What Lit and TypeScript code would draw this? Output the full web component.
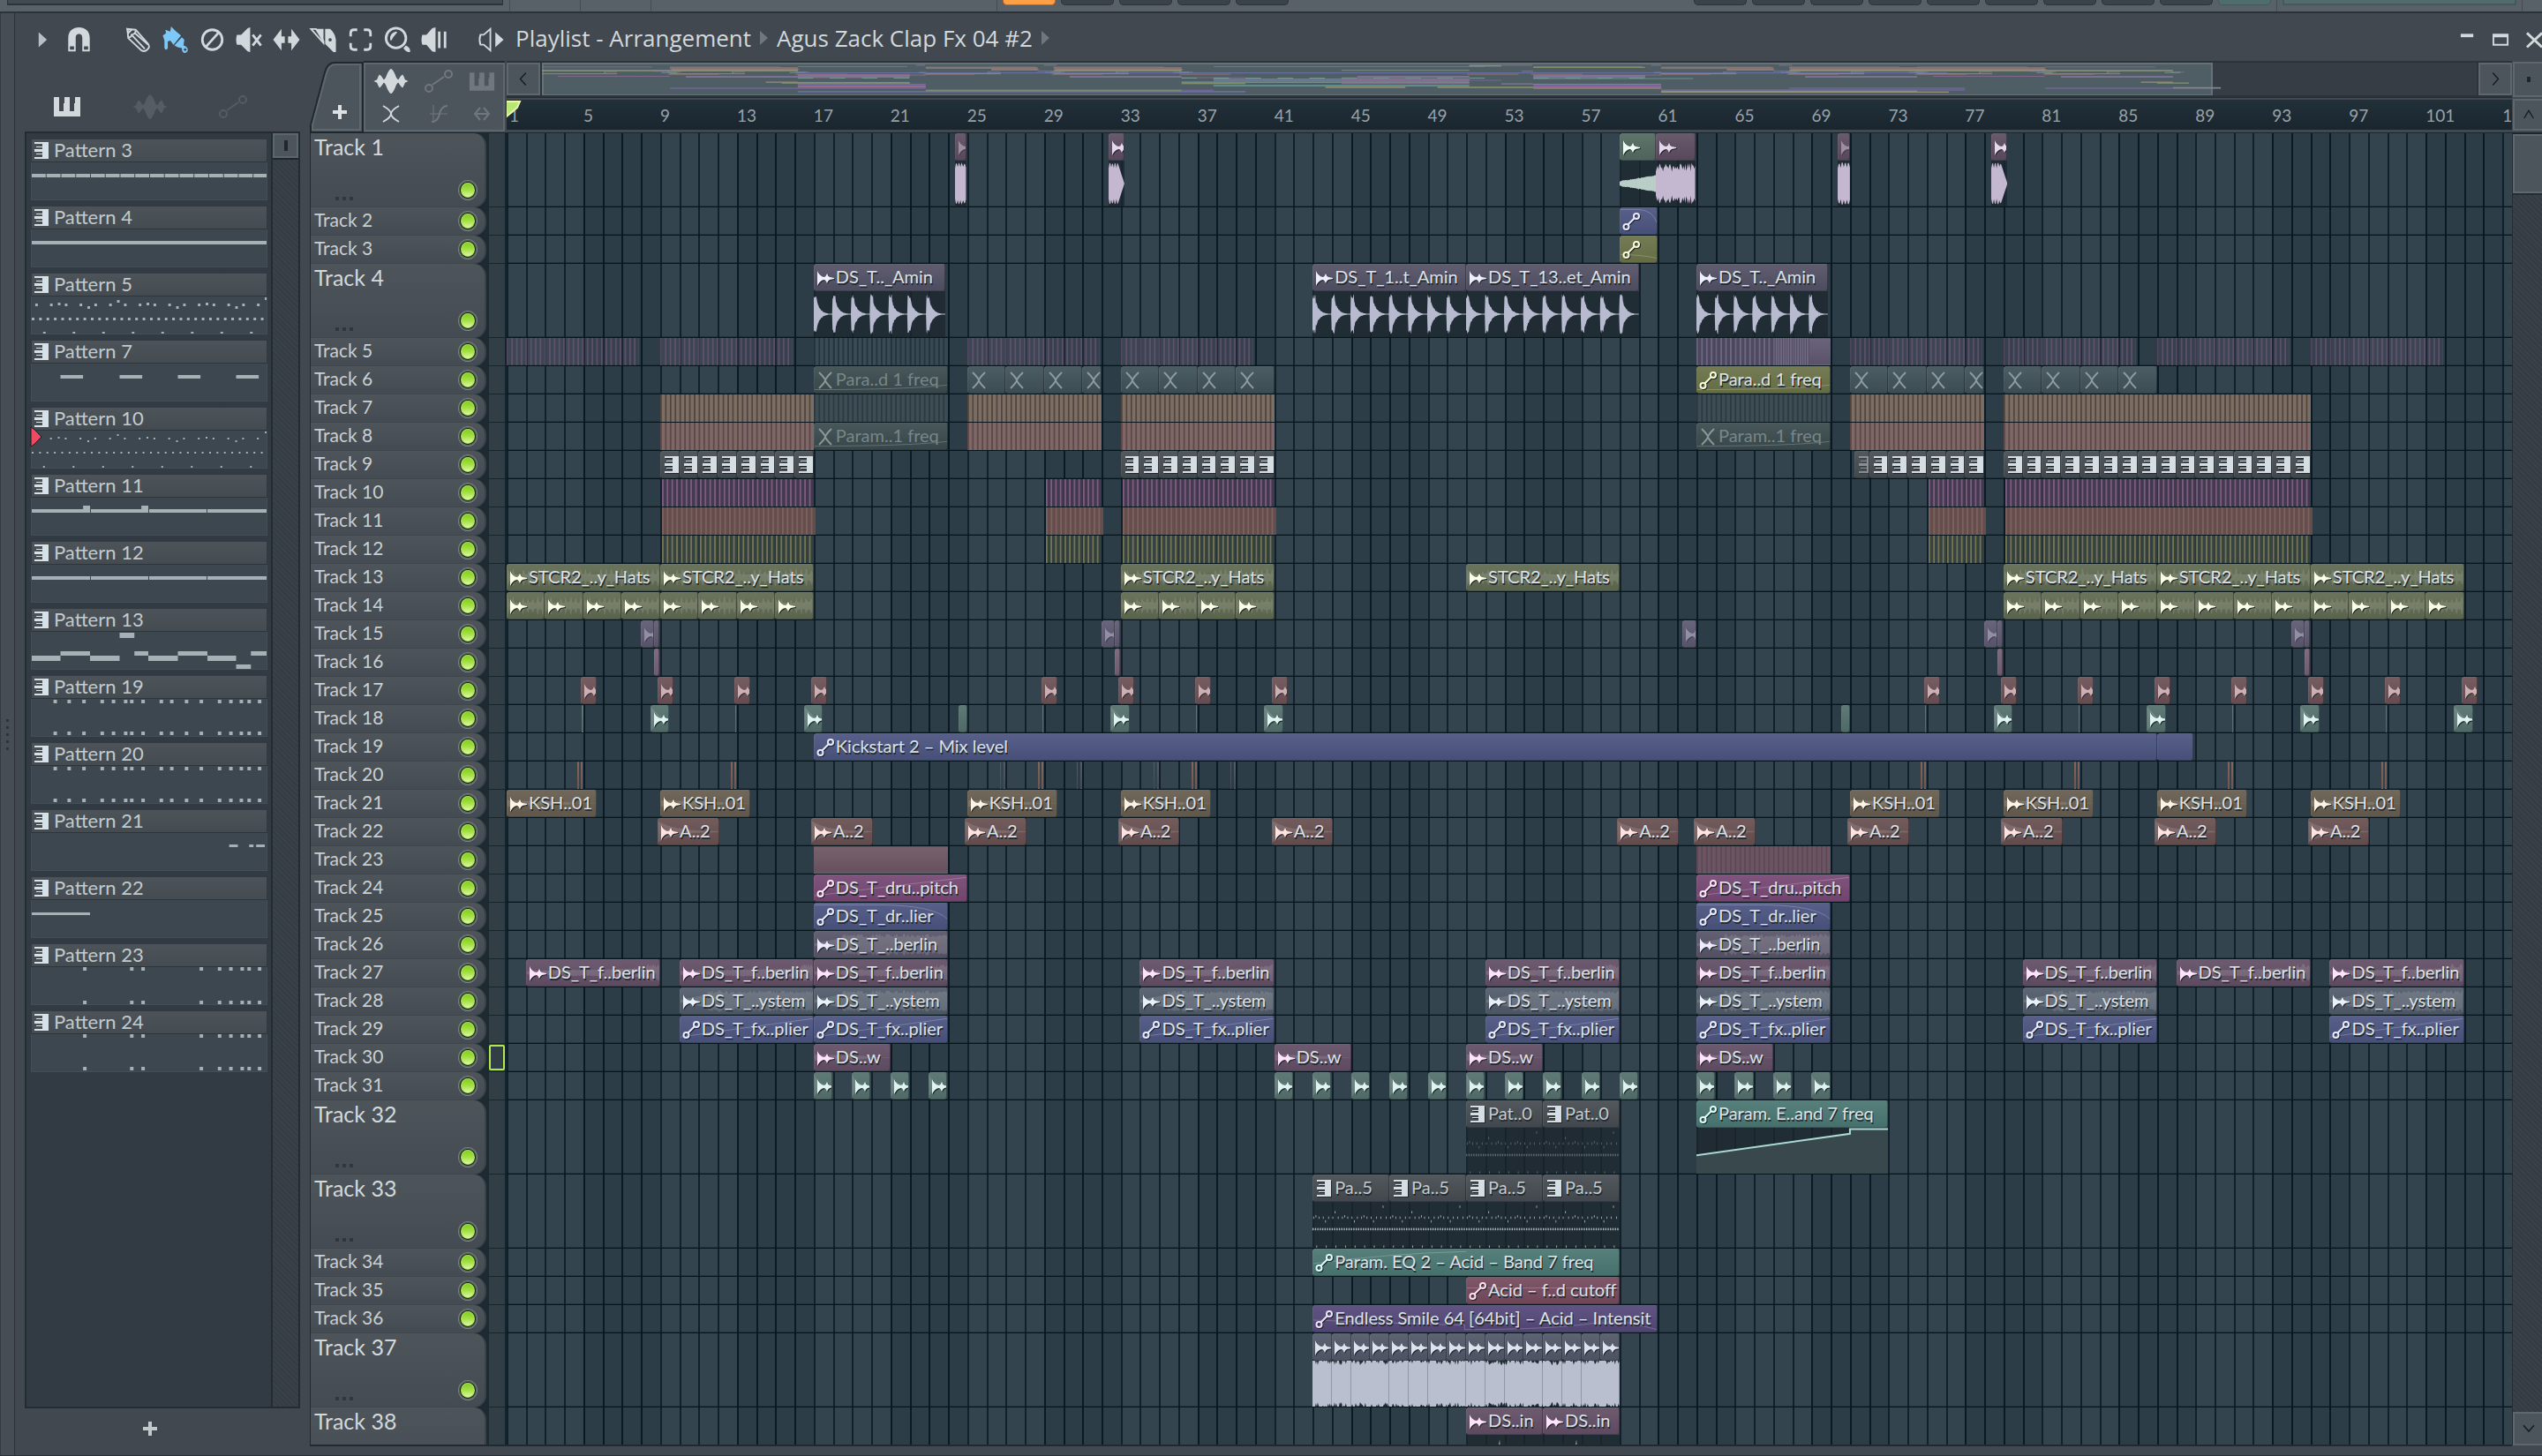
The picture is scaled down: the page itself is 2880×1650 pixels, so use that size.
import { LitElement, html, svg, css, nothing } from "lit";
import { customElement, property } from "lit/decorators.js";

/* ---------- timeline model ---------- */

const BARS = 104.5;
const MAP_BARS = 121;

type Kind = "wave" | "auto" | "piano" | "mute" | "none";
interface Clip {
  s: number;
  e: number;
  c: string;
  k: Kind;
  t?: string;
  body?: string;
  deco?: string;
  n?: number;
}
interface Track {
  n: number;
  tall: boolean;
  clips: Clip[];
}

const clip = (s: number, e: number, c: string, k: Kind, t = "", extra: Partial<Clip> = {}): Clip => ({ s, e, c, k, t, ...extra });
const many = (starts: number[], len: number, c: string, k: Kind, t = "", extra: Partial<Clip> = {}) =>
  starts.map((s) => clip(s, s + len, c, k, t, extra));
const range = (from: number, to: number, step: number) => {
  const out: number[] = [];
  for (let i = from; i < to; i += step) out.push(i);
  return out;
};
const stripes = (pairs: number[][], c: string, perBar = 4) =>
  pairs.map(([s, e]) => clip(s, e, "stripe " + c, "none", "", { n: Math.round((e - s) * perBar) }));

const BIG = new Set([1, 4, 32, 33, 37, 38]);

const CLIPS: Record<number, Clip[]> = {
  1: [
    clip(24.38, 24.95, "plum", "wave", "", { body: "block", deco: "dim" }),
    clip(32.38, 33.2, "plum", "wave", "", { body: "blockEnd" }),
    clip(59, 60.9, "moss", "wave", "", { body: "grow" }),
    clip(60.9, 62.95, "plum", "wave", "", { body: "block2" }),
    clip(70.36, 71, "plum", "wave", "", { body: "block", deco: "dim" }),
    clip(78.36, 79.2, "plum", "wave", "", { body: "blockEnd" }),
  ],
  2: [clip(59, 61, "blue", "auto", "", { deco: "fall" })],
  3: [clip(59, 61, "olive", "auto", "", { deco: "fallLow" })],
  4: [
    clip(17, 23.85, "slate", "wave", "DS_T.._Amin", { body: "hits", n: 7 }),
    clip(43, 51, "slate", "wave", "DS_T_1..t_Amin", { body: "hits", n: 8 }),
    clip(51, 60, "slate", "wave", "DS_T_13..et_Amin", { body: "hits", n: 9 }),
    clip(63, 69.85, "slate", "wave", "DS_T.._Amin", { body: "hits", n: 7 }),
  ],
  5: [
    ...stripes([[1, 7.9], [9, 15.9], [25, 31.9], [33, 39.9], [71, 77.9], [79, 85.9], [87, 93.9], [95, 101.9]], "s-violet"),
    ...stripes([[17, 24]], "s-mute", 4),
    ...stripes([[63, 67]], "s-lilac", 4),
    ...stripes([[67, 68.9]], "s-lilac", 8),
    clip(68.9, 70, "lilac flat", "none"),
  ],
  6: [
    clip(17, 24, "muted", "mute", "Para..d 1 freq", { deco: "curve" }),
    ...many([25, 27, 29], 2, "muted2", "mute"), clip(31, 32, "muted2", "mute"),
    ...many([33, 35, 37, 39], 2, "muted2", "mute"),
    clip(63, 70, "olive", "auto", "Para..d 1 freq", { deco: "curve" }),
    ...many([71, 73, 75], 2, "muted2", "mute"), clip(77, 78, "muted2", "mute"),
    ...many([79, 81, 83, 85], 2, "muted2", "mute"),
  ],
  7: [
    ...stripes([[9, 17], [25, 32], [33, 41], [71, 78], [79, 95]], "s-brown"),
    ...stripes([[17, 24], [63, 70]], "s-mute2"),
  ],
  8: [
    ...stripes([[9, 17], [25, 32], [33, 41], [71, 78], [79, 95]], "s-rose"),
    ...many([17, 63], 7, "muted", "mute", "Param..1 freq", { deco: "curve" }),
  ],
  9: [
    ...many(range(9, 17, 1), 1, "pattern", "piano"),
    ...many(range(33, 41, 1), 1, "pattern", "piano"),
    clip(71.25, 72, "pattern", "piano", "", { deco: "dim" }),
    ...many(range(72, 78, 1), 1, "pattern", "piano"),
    ...many(range(79, 95, 1), 1, "pattern", "piano"),
  ],
  10: stripes([[9.1, 17], [29.1, 32], [33.1, 41], [75.1, 78], [79.1, 95]], "s-purple"),
  11: stripes([[9.1, 17.1], [29.1, 32.1], [33.1, 41.1], [75.1, 78.1], [79.1, 95.1]], "s-clay"),
  12: stripes([[9.1, 17], [29.1, 32], [33.1, 41], [75.1, 78], [79.1, 95]], "s-olive"),
  13: many([1, 9, 33, 51, 79, 87, 95], 8, "hats", "wave", "STCR2_..y_Hats", { deco: "hat" }),
  14: [
    ...many(range(1, 17, 2), 2, "hats", "wave", "", { deco: "hat" }),
    ...many(range(33, 41, 2), 2, "hats", "wave", "", { deco: "hat" }),
    ...many(range(79, 103, 2), 2, "hats", "wave", "", { deco: "hat" }),
  ],
  15: [
    ...[8, 32, 78, 94].flatMap((s) => [
      clip(s, s + 0.67, "violet", "wave", "", { deco: "dim" }),
      clip(s + 0.7, s + 0.98, "violet", "none"),
    ]),
    clip(62.28, 63, "violet", "wave", "", { deco: "dim" }),
  ],
  16: many([8.67, 32.67, 78.67, 94.67], 0.31, "pink", "none"),
  17: many([4.86, 8.86, 12.86, 16.86, 28.86, 32.86, 36.86, 40.86, 74.86, 78.86, 82.86, 86.86, 90.86, 94.86, 98.86, 102.86], 0.83, "brick", "wave", "", { deco: "pale" }),
  18: [
    ...many([8.48, 16.48, 32.48, 40.48, 78.48, 86.48, 94.48, 102.48], 0.98, "teal", "wave", "", { deco: "tri" }),
    ...many([24.56, 70.56], 0.44, "teal", "none"),
    ...many([4.9, 12.9, 28.9, 36.9, 74.9, 82.9, 90.9, 98.9], 0.08, "teal flat", "none"),
  ],
  19: [clip(17, 87, "blue", "auto", "Kickstart 2 – Mix level"), clip(87, 88.9, "blue", "none")],
  20: [
    ...many([4.68, 4.86, 12.68, 12.86, 28.68, 28.86, 36.68, 36.86, 74.68, 74.86, 82.68, 82.86, 90.68, 90.86, 98.68, 98.86], 0.1, "rust flat", "none"),
    ...many([26.7, 26.9, 30.7, 30.9, 34.7, 34.9, 38.7, 38.9], 0.08, "ghost flat", "none"),
  ],
  21: many([1, 9, 25, 33, 71, 79, 87, 95], 4.7, "tan", "wave", "KSH..01", { deco: "mid" }),
  22: many([8.87, 16.87, 24.87, 32.87, 40.87, 58.87, 62.87, 70.87, 78.87, 86.87, 94.87], 3.2, "clay", "wave", "A..2", { deco: "decay" }),
  23: [clip(17, 24, "mauve flat", "none"), ...stripes([[63, 70]], "s-mauve")],
  24: many([17, 63], 8, "magenta", "auto", "DS_T_dru..pitch", { deco: "rise" }),
  25: many([17, 63], 7, "blue", "auto", "DS_T_dr..lier", { deco: "fall" }),
  26: many([17, 63], 7, "grape", "wave", "DS_T_..berlin", { deco: "noise" }),
  27: many([2, 10, 17, 34, 52, 63, 80, 88, 96], 7, "orchid", "wave", "DS_T_f..berlin", { deco: "noiseEnd" }),
  28: many([10, 17, 34, 52, 63, 80, 96], 7, "steel", "wave", "DS_T_..ystem", { deco: "noise" }),
  29: many([10, 17, 34, 52, 63, 80, 96], 7, "blue", "auto", "DS_T_fx..plier", { deco: "rise" }),
  30: many([17, 41, 51, 63], 4, "orchid", "wave", "DS..w", { deco: "mid" }),
  31: many([17, 19, 21, 23, ...range(41, 60, 2), 63, 65, 67, 69], 0.97, "teal", "wave", "", { deco: "decay" }),
  32: [
    ...many([51, 55], 4, "pattern", "piano", "Pat..0", { body: "notesDim" }),
    clip(63, 73, "sea", "auto", "Param. E..and 7 freq", { body: "ramp" }),
  ],
  33: many([43, 47, 51, 55], 4, "pattern", "piano", "Pa..5", { body: "notes" }),
  34: [clip(43, 59, "sea", "auto", "Param. EQ 2 – Acid – Band 7 freq", { deco: "riseHalf" })],
  35: [clip(51, 59, "wine", "auto", "Acid – f..d cutoff", { deco: "line" })],
  36: [clip(43, 61, "indigo", "auto", "Endless Smile 64 [64bit] – Acid – Intensit", { deco: "swell" })],
  37: many(range(43, 59, 1), 1, "slateblue", "wave", "", { body: "full" }),
  38: many([51, 55], 4, "orchid", "wave", "DS..in", { body: "tips" }),
};

const TRACKS: Track[] = Array.from({ length: 38 }, (_, i) => ({ n: i + 1, tall: BIG.has(i + 1), clips: CLIPS[i + 1] ?? [] }));

/* ---------- waveforms ---------- */

const noise = (seed: number) => {
  let a = seed;
  return () => {
    a = (a * 16807) % 2147483647;
    return a / 2147483647;
  };
};

/** Mirrors an amplitude envelope round the middle of a 100-unit high box. */
const mirror = (width: number, step: number, amp: (x: number) => number) => {
  const top: string[] = [];
  const low: string[] = [];
  for (let x = 0; x <= width; x += step) {
    const a = amp(x);
    top.push(`${x} ${(50 - a * 50).toFixed(1)}`);
    low.unshift(`${x} ${(50 + a * 50).toFixed(1)}`);
  }
  return `M${top.join("L")}L${low.join("L")}Z`;
};

const box = (w: number, cls: string, inner: unknown) =>
  html`<svg class=${cls} viewBox="0 0 ${w} 100" preserveAspectRatio="none" aria-hidden="true">${inner}</svg>`;

const noteDots = () => {
  const mids = [-3, 8, -12, -3, 8, -3, 8, -24];
  const out: unknown[] = [];
  for (let i = 0; i < 8; i++) {
    out.push(svg`<rect x=${i * 12.5 + 1} y="32" width="1" height="5"/><rect x=${i * 12.5 + 4} y=${32 + mids[i]} width="1" height="5"/><rect x=${i * 12.5 + 8} y="32" width="1" height="5"/>`);
    out.push(svg`<rect x=${i * 12.5 + 5} y="95" width="1" height="5"/>`);
  }
  for (let i = 0; i < 32; i++) out.push(svg`<rect x=${i * 3.125} y="57" width="1.6" height="5"/>`);
  return out;
};

const bodyArt = (c: Clip) => {
  const r = noise(Math.round(c.s * 97) + 11);
  switch (c.body) {
    case "hits": {
      const n = c.n ?? 7;
      const path = mirror(n * 40, 1, (x) => {
        const p = (x % 40) / 40;
        const a = p < 0.16 ? 0.68 + r() * 0.2 : Math.exp(-(p - 0.16) * 5) * 0.58 * (0.85 + r() * 0.25);
        return Math.max(0.02, x > n * 40 - 2 ? 0.02 : a);
      });
      return box(n * 40, "fill", svg`<path d=${path}/>`);
    }
    case "block":
      return box(12, "fill", svg`<path d=${mirror(12, 1, (x) => (x % 3 ? 0.84 : 0.66) + r() * 0.08)}/>`);
    case "block2":
      return box(44, "fill", svg`<path d=${mirror(44, 1, () => 0.5 + r() * 0.4)}/>`);
    case "blockEnd":
      return box(18, "fill", svg`<path d=${mirror(18, 1, (x) => (x < 11 ? (x % 3 ? 0.84 : 0.66) + r() * 0.08 : 0.84 - (x - 11) * 0.118))}/>`);
    case "grow":
      return box(40, "fill", svg`<path d=${mirror(40, 1, (x) => 0.08 + (x / 40) * 0.26 + r() * 0.04)}/>`);
    case "full":
      return box(22, "fill", svg`<path d=${mirror(22, 1, () => 1 - (r() > 0.6 ? r() * 0.2 : 0))}/>`);
    case "tips":
      return box(80, "fill", svg`<path d="M33 40L35 10L36 40ZM66 40L67 20L68 40ZM71 40L72 20L73 40Z"/>`);
    case "notes":
      return box(100, "fill", noteDots());
    case "notesDim":
      return box(100, "fill faint", noteDots());
    case "ramp":
      return box(100, "fill", svg`<path class="under" d="M0 60L80 13V3H100V100H0Z"/><path class="stroke" d="M0 60L80 13V3H100"/>`);
    default:
      return nothing;
  }
};

const decoArt = (c: Clip) => {
  const r = noise(Math.round(c.s * 31) + 7);
  const len = c.e - c.s;
  const w = Math.max(20, Math.round(len * 22));
  const area = (f: (x: number) => number) => box(w, "deco", svg`<path d=${mirror(w, 1, f)}/>`);
  const line = (d: string) => box(100, "deco", svg`<path class="thin" d=${d}/>`);
  switch (c.deco) {
    case "hat": {
      const period = 88;
      return area((x) => {
        const p = (x % period) / period;
        const peak = x % 6 < 2 ? 0.75 : 0.35;
        return p > 0.1 && p < 0.2 ? 0.25 : peak * (0.6 + r() * 0.35);
      });
    }
    case "mid":
      return area((x) => (x < w * 0.7 ? 0.22 - (x / w) * 0.18 + r() * 0.04 : 0.02));
    case "decay":
      return area((x) => Math.max(0.02, 0.8 * Math.exp(-x / (w * 0.28)) + r() * 0.05));
    case "tri":
      return area((x) => Math.max(0.05, 0.9 - (x / w) * 1.4));
    case "noise":
      return area((x) => (x < w * 0.2 ? 0.1 + (x / w) * 2 : 0.55 + r() * 0.3));
    case "noiseEnd":
      return area((x) => (x > w * 0.9 ? 0.4 + r() * 0.3 : 0.1 + (x / w) * 0.2 + r() * 0.1));
    case "rise":
      return line("M0 80L40 50L100 8");
    case "riseHalf":
      return line("M0 55Q25 15 50 8");
    case "fall":
      return line("M0 5H50Q90 8 100 60");
    case "fallLow":
      return line("M0 70Q60 72 100 85");
    case "curve":
      return line("M0 88Q70 88 100 70");
    case "line":
      return line("M0 40H100");
    case "swell":
      return line("M0 55L20 65L44 75V92Q70 92 82 66L92 66L100 92");
    default:
      return nothing;
  }
};

/* ---------- icons ---------- */

const icon = (vb: string, cls: string, inner: unknown) => html`<svg class="icon ${cls}" viewBox=${vb} aria-hidden="true">${inner}</svg>`;

const clipIcons: Record<Kind, unknown> = {
  wave: svg`<path d="M1 3C3 7 6 10 9 10Q11 9 12 6Q13 9 15 10L20 11V12L15 13Q13 14 12 17Q11 14 9 13C6 13 3 16 1 20Z"/>`,
  auto: svg`<path class="ln" d="M6.500 14.500L13.500 7.500"/><circle class="ln" cx="4.500" cy="17" r="3"/><circle class="ln" cx="16" cy="5" r="3"/>`,
  piano: svg`<path d="M2 1H18V20H2V18H11V15H4V14H11V12H2V9H11V7H4V6H11V3H2Z"/>`,
  mute: svg`<path class="ln" d="M3 2Q10 9 10 11T3 20M17 2Q10 9 10 11T17 20"/>`,
  none: nothing,
};

const I = {
  play: icon("0 0 32 32", "", svg`<path d="M11 7L21 16L11 25Z"/>`),
  magnet: icon("0 0 32 32", "", svg`<path fill-rule="evenodd" d="M3 30V14C3 5 9 1 16 1S29 5 29 14V30H20V14C20 10 18 9 16 9S12 10 12 14V30ZM5 24V28H10V24ZM22 24V28H27V24Z"/>`),
  pencil: icon("0 0 32 32", "", svg`<path class="s2" d="M3 3L4 14L20 29Q24 31 27 28Q31 25 28 21L13 4Z"/><path class="s2" d="M4 13Q8 13 8 10Q13 9 13 5M9 11L24 27M12 8L28 22M3 3L8 4L4 8Z"/>`),
  brush: icon("0 0 32 32", "", svg`<path d="M1 11L5 8L4 4L10 6L11 0L16 5L23 11L14 22L10 17L7 18L7 26Q5 30 3 26V17Z"/><path d="M24 13L15 23L19 25L24 26Q24 32 28 32Q32 31 31 27Q30 24 26 23L27 16Z"/><circle cx="28" cy="28" r="1.500" class="hole"/>`),
  ban: icon("0 0 32 32", "", svg`<circle class="s3" cx="16" cy="16" r="12"/><path class="s3" d="M8 25L24 7"/>`),
  mute: icon("0 0 32 32", "", svg`<path d="M1 10H6L14 2L17 1V31L14 30L6 22H1Q-1 16 1 10Z"/><path class="s3" d="M20 10L30 23M30 10L20 23"/>`),
  slip: icon("0 0 32 32", "", svg`<path d="M0 16L10 3V12H14V20H10V29ZM32 16L22 3V12H18V20H22V29Z"/>`),
  knife: icon("0 0 32 32", "", svg`<path class="s2" d="M1 3H7L16 18V20Z"/><path d="M6 3H16V17Z"/><path fill-rule="evenodd" d="M18 3H24Q30 8 31 16V31H28L18 21ZM24 14A2 2 0 1 0 24 18A2 2 0 1 0 24 14Z"/>`),
  select: icon("0 0 32 32", "", svg`<path class="s3" d="M4 12V8Q4 4 8 4H12M20 4H24Q28 4 28 8V12M28 20V24Q28 28 24 28H20M12 28H8Q4 28 4 24V20"/>`),
  zoom: icon("0 0 32 32", "", svg`<circle class="s3" cx="14" cy="14" r="12"/><path d="M7 16Q6 8 14 6Q17 6 13 10Q10 13 9 16Q8 18 7 16ZM23 26L26 23Q32 26 31 31Q26 31 23 26Z"/>`),
  playback: icon("0 0 32 32", "", svg`<path d="M1 10H6L13 2L17 1V31L13 30L6 22H1Q-1 16 1 10ZM20 6H23V26H20ZM27 6H30V26H27Z"/>`),
  speaker: icon("0 0 32 32", "", svg`<path class="s2" d="M3 10H7L15 3V29L7 22H3Q1 16 3 10Z"/><path d="M21 7L31 16L21 25Z"/>`),
  keys: icon("0 0 32 24", "", svg`<path d="M1 1H7V17H12V8H13V1H19V17H24V8H25V1H31V23H1Z"/>`),
  waves: icon("0 0 42 30", "", svg`<path d="M0 15L4 13Q6 8 7 7Q9 8 12 13Q14 13 16 7Q19 0 21 0Q23 0 26 7Q28 13 30 13Q33 8 35 7Q36 8 38 13L42 15L38 17Q36 22 35 23Q33 22 30 17Q28 17 26 23Q23 30 21 30Q19 30 16 23Q14 17 12 17Q9 22 7 23Q6 22 4 17Z"/>`),
  auto: icon("0 0 32 28", "", svg`<circle class="s2" cx="5" cy="22" r="4"/><circle class="s2" cx="27" cy="6" r="4"/><path class="s2" d="M9 18L22 9"/>`),
  cross: icon("0 0 20 20", "", svg`<path class="s2" d="M1 1Q10 6 10 10T1 19M19 1Q10 6 10 10T19 19"/>`),
  fade: icon("0 0 20 20", "", svg`<path class="s1" d="M0 10H20M4 0V20"/><path class="s2" d="M2 19Q9 19 11 10T20 1"/>`),
  stretch: icon("0 0 20 16", "", svg`<path class="s2" d="M8 1L2 8L8 15M12 1L18 8L12 15M4 8H16"/>`),
  chev: (d: string) => icon("0 0 20 24", "dark", svg`<path class="s2" d=${d}/>`),
  min: icon("0 0 20 20", "", svg`<path d="M2 3H17V7H2Z"/>`),
  max: icon("0 0 20 20", "", svg`<path fill-rule="evenodd" d="M0 3H19V17H0ZM2 7V15H17V7Z"/>`),
  close: icon("0 0 20 20", "", svg`<path class="s3" d="M1 2L19 19M19 2L1 19"/>`),
};

const iconCss = css`
  .icon { display: block; fill: currentColor; overflow: visible; }
  .s1, .s2, .s3 { fill: none; stroke: currentColor; }
  .s1 { stroke-width: 1; }
  .s2 { stroke-width: 2; }
  .s3 { stroke-width: 3; }
  .hole { fill: #41484f; }
  button { appearance: none; border: 0; background: none; padding: 0; margin: 0; color: inherit; font: inherit; display: flex; align-items: center; justify-content: center; box-sizing: border-box; }
`;

/* ---------- pattern picker ---------- */

type R = [number, number, number, number];
const dots = (xs: number[], y: number): R[] => xs.map((x) => [x, y, 4, 4]);
const arp = (size: number): R[] => {
  const mids = [-1, 3, -4, -1, 3, -1, 3, -7];
  const out: R[] = [];
  for (let i = 0; i < 8; i++) {
    out.push([i * 34 + 4, 8, size, size], [i * 34 + 21, 8, size, size], [i * 34 + 30, 8 + mids[i], size, size]);
    out.push([i * 34 + 13, 40, size, 2]);
  }
  for (let i = 0; i < 32; i++) out.push([i * 8.5, 24, size, size]);
  return out;
};
const ROW19 = [25, 41, 58, 79, 92, 106, 113, 126, 147, 159, 176, 193, 214, 227, 239, 248, 260];
const ROW24 = [59, 113, 126, 193, 214, 227, 240, 248, 260];

const PATTERNS: { n: number; notes: R[] }[] = [
  { n: 3, notes: Array.from({ length: 16 }, (_, i): R => [i * 17, 13, 16, 4]) },
  { n: 4, notes: [[0, 13, 270, 4]] },
  { n: 5, notes: arp(3) },
  { n: 7, notes: [[33, 13, 26, 4], [101, 13, 26, 4], [168, 13, 26, 4], [235, 13, 26, 4]] },
  { n: 10, notes: arp(2) },
  { n: 11, notes: [[0, 13, 67, 4], [68, 13, 66, 4], [135, 13, 66, 4], [202, 13, 68, 4], [59, 9, 8, 4], [126, 9, 8, 4]] },
  { n: 12, notes: [[0, 13, 67, 4], [68, 13, 66, 4], [135, 13, 66, 4], [202, 13, 68, 4]] },
  { n: 13, notes: [[101, 1, 17, 6], [0, 27, 33, 6], [33, 22, 34, 5], [67, 27, 34, 6], [118, 22, 16, 5], [134, 27, 34, 6], [168, 22, 34, 5], [202, 27, 33, 6], [235, 37, 17, 5], [252, 22, 18, 5]] },
  { n: 19, notes: [...dots(ROW19, 1), ...dots(ROW19, 37)] },
  { n: 20, notes: [...dots(ROW19, 1), ...dots(ROW19, 37)] },
  { n: 21, notes: [[227, 13, 10, 3], [250, 13, 5, 3], [258, 13, 10, 3]] },
  { n: 22, notes: [[0, 14, 67, 3]] },
  { n: 23, notes: [...dots(ROW24, 0), ...dots(ROW24, 38)] },
  { n: 24, notes: [...dots(ROW24, 0), ...dots(ROW24, 37)] },
];

@customElement("pattern-picker")
export class PatternPicker extends LitElement {
  static styles = [
    iconCss,
    css`
      :host { display: flex; flex-direction: column; min-height: 0; }
      .tabs { height: 80px; display: flex; align-items: center; gap: 52px; padding: 24px 0 0 27px; box-sizing: border-box; color: #555c62; }
      .tabs button { width: 42px; height: 32px; }
      .tabs .on { color: #d2d8db; }
      .tabs .icon { height: 28px; width: 42px; }
      .tabs .on .icon { height: 24px; width: 32px; }
      .frame { flex: 1; min-height: 0; display: flex; border: 2px solid #222c34; background: #323b44; }
      .list { flex: 1; padding: 7px 4px 0 5px; display: flex; flex-direction: column; gap: 7px; margin: 0; list-style: none; overflow: hidden; }
      .item { height: 69px; display: flex; flex-direction: column; }
      .name { height: 26px; margin: 0 1px; align-items: flex-start; justify-content: flex-start; gap: 5px; padding-left: 3px; background: linear-gradient(#4c545a, #444c52); border-bottom: 1px solid #2c353d; color: #c3cacc; font-size: 22px; line-height: 23px; }
      .name .icon { width: 17px; height: 20px; margin-top: 3px; color: #d7e2e8; }
      .preview { flex: 1; position: relative; border: 1px solid #454e56; border-top: 0; background: #3d4750; }
      .preview svg { display: block; width: 100%; height: 100%; fill: #a6b1b5; }
      .preview .cursor { position: absolute; left: -2px; top: -5px; width: 14px; height: 24px; fill: #ec4a63; stroke: #14191e; overflow: visible; }
      .bar { width: 29px; border-left: 2px solid #222c34; background: repeating-linear-gradient(45deg, #343c44 0 2px, #3a4149 2px 4px); }
      .thumb { height: 28px; width: 100%; background: #4d555c; border: 2px solid #5d666c; box-shadow: 0 2px #1e272e; }
      .thumb i { width: 4px; height: 12px; background: #20282e; }
      .add { height: 53px; width: 100%; color: #c3c8cb; padding: 0 28px 7px 0; }
      .add .icon { width: 16px; height: 16px; }
    `,
  ];
  render() {
    return html`
      <nav class="tabs">
        <button class="on" aria-label="Patterns">${I.keys}</button>
        <button aria-label="Audio clips">${I.waves}</button>
        <button aria-label="Automation clips">${I.auto}</button>
      </nav>
      <div class="frame">
        <ul class="list">
          ${PATTERNS.map(
            (p) => html`<li class="item">
              <button class="name"><svg class="icon" viewBox="2 1 17 20" aria-hidden="true">${clipIcons.piano}</svg>Pattern ${p.n}</button>
              <div class="preview">
                <svg viewBox="0 0 270 42" preserveAspectRatio="none" aria-hidden="true">
                  ${p.notes.map(([x, y, w, h]) => svg`<rect x=${x} y=${y} width=${w} height=${h}/>`)}
                </svg>
                ${p.n === 10 ? html`<svg class="cursor" viewBox="0 0 14 24" preserveAspectRatio="none" aria-hidden="true"><path d="M1 1Q4 2 13 12Q4 22 1 23Z" /></svg>` : nothing}
              </div>
            </li>`
          )}
        </ul>
        <div class="bar"><button class="thumb" aria-label="Scroll patterns"><i></i></button></div>
      </div>
      <button class="add" aria-label="Add pattern">${icon("0 0 16 16", "", svg`<path d="M6 0H10V6H16V10H10V16H6V10H0V6H6Z"/>`)}</button>
    `;
  }
}

/* ---------- clip ---------- */

@customElement("track-lane")
export class TrackLane extends LitElement {
  @property({ attribute: false }) track!: Track;

  static styles = css`
    :host { display: block; position: relative; overflow: hidden; box-shadow: inset 0 -1px #07151d, inset 0 -2px rgba(8, 22, 30, 0.35); }
    .clip { position: absolute; top: 0; bottom: 1px; box-sizing: border-box; display: flex; flex-direction: column; overflow: hidden; color: #dde1e4; --g: #fff; --w: #bbbfd0; }
    .head { position: relative; height: 31px; flex: none; box-sizing: border-box; border: 1px solid; border-color: rgba(255, 255, 255, 0.12) rgba(0, 0, 0, 0.3) rgba(0, 0, 0, 0.3) rgba(255, 255, 255, 0.06); border-radius: 3px; background: linear-gradient(rgba(255, 255, 255, 0.07), rgba(0, 0, 0, 0.05)) var(--c); overflow: hidden; display: flex; gap: 2px; padding-left: 2px; }
    .glyph { position: relative; flex: none; width: 20px; height: 22px; margin-top: 4px; fill: var(--g); filter: drop-shadow(1px 1px #20262c); }
    .ln { fill: none; stroke: var(--g); stroke-width: 2; }
    .label { position: relative; white-space: nowrap; font-size: 20px; line-height: 26px; text-shadow: 1px 2px #222930; }
    .dim .glyph { opacity: 0.45; }
    .pale .glyph { opacity: 0.75; }
    .deco { position: absolute; inset: 0; width: 100%; height: 100%; fill: rgba(255, 255, 255, 0.13); }
    .thin { fill: none; stroke: rgba(255, 255, 255, 0.22); stroke-width: 1; vector-effect: non-scaling-stroke; }
    .body { flex: 1; background: rgba(28, 38, 45, 0.78); display: flex; min-height: 0; }
    .fill { width: 100%; height: 100%; fill: var(--w); }
    .faint { opacity: 0.45; }
    .stroke { fill: none; stroke: #a9dad3; stroke-width: 2; vector-effect: non-scaling-stroke; }
    .under { fill: #39484c; }

    .plum { --c: #5c4c60; --g: #e6d8ec; --w: #c4b8d0; }
    .moss { --c: #53695f; --g: #f0fff6; --w: #b9cec7; }
    .slate { --c: #525064; --g: #eef0ff; --w: #b8bbcf; }
    .blue { --c: #4b5480; --g: #e9ecff; }
    .olive { --c: #6a7248; --g: #fbffd8; }
    .hats { --c: #5f6950; --g: #fbffe6; }
    .violet { --c: #5c5870; --g: #cfcde4; }
    .pink { --c: #765f76; }
    .brick { --c: #6b5055; --g: #eccfd2; }
    .teal { --c: #536f6c; --g: #dff4f0; }
    .rust { --c: #7a5a50; }
    .ghost { --c: #46505c; }
    .tan { --c: #665c4f; --g: #fff3e2; }
    .clay { --c: #684f50; --g: #ffe3e0; }
    .mauve { --c: #6c5562; }
    .lilac { --c: #5f5770; }
    .magenta { --c: #764873; --g: #ffe6fb; }
    .grape { --c: #585468; --g: #edeaff; }
    .orchid { --c: #624e65; --g: #ffe3fb; --w: #cdbccf; }
    .steel { --c: #505a69; --g: #e8f0fa; }
    .sea { --c: #4a7672; --g: #dcfff8; }
    .wine { --c: #744a5d; --g: #ffe0ea; }
    .indigo { --c: #544878; --g: #ece4ff; }
    .slateblue { --c: #505768; --g: #dde2ee; --w: #b9bfce; }
    .pattern { --c: #454b50; --g: #d4dee3; color: #c3cacd; --w: #aab3b7; }
    .muted { --c: #394a4d; --g: #8b9799; color: #788689; }
    .muted2 { --c: #3e5057; --g: #8d9a9f; }
    .muted .label { text-shadow: none; }
    .muted .glyph, .muted2 .glyph { filter: none; }
    .slateblue .head { padding-left: 1px; }
    .flat .head { border-radius: 0; border-color: transparent; background-clip: border-box; }

    .stripe { background-image: linear-gradient(90deg, var(--l) 0 2px, var(--f) 2px); background-size: calc(100% / var(--n)) 100%; }
    .stripe .head { display: none; }
    .s-violet { --l: rgba(110, 88, 118, 0.7); --f: rgba(84, 68, 94, 0.3); }
    .s-lilac { --l: rgba(122, 110, 140, 0.85); --f: rgba(88, 76, 104, 0.7); }
    .s-mute { --l: #24343d; --f: rgba(64, 80, 90, 0.6); }
    .s-mute2 { --l: #2b3a42; --f: #3e4c53; }
    .s-brown { --l: #51463f; --f: #7d6e64; }
    .s-rose { --l: #5c474a; --f: #7f6766; }
    .s-purple { --l: #7c5c80; --f: rgba(74, 56, 80, 0.75); }
    .s-clay { --l: #7c625f; --f: #654d4c; }
    .s-olive { --l: #747552; --f: rgba(56, 66, 58, 0.6); }
    .s-mauve { --l: #5c4856; --f: #6c5562; }
  `;
  render() {
    return this.track.clips.map((c) => {
      const pos = `left:${((c.s - 1) / BARS) * 100}%;width:${((c.e - c.s) / BARS) * 100}%;--n:${c.n ?? 1}`;
      return html`<div class="clip ${c.c} ${c.deco ?? ""}" style=${pos}>
        <div class="head">
          ${decoArt(c)}
          ${c.k === "none" ? nothing : html`<svg class="glyph" viewBox="0 0 20 22" aria-hidden="true">${clipIcons[c.k]}</svg>`}
          ${c.t ? html`<span class="label">${c.t}</span>` : nothing}
        </div>
        ${c.body ? html`<div class="body">${bodyArt(c)}</div>` : nothing}
      </div>`;
    });
  }
}

/* ---------- overview map ---------- */

const MAP_COLOURS: Record<string, string> = {
  plum: "#8b7590", moss: "#7b958a", slate: "#7f7d96", blue: "#6f7ab4", olive: "#98a068", hats: "#8f9a78", "s-violet": "#7b7088",
  "s-brown": "#a08b78", "s-rose": "#a07c7e", "s-purple": "#8f7090", "s-clay": "#a07c74", "s-olive": "#8f9068", brick: "#9c7276", teal: "#7ba09c",
  tan: "#a0907a", clay: "#9c7876", mauve: "#94748a", magenta: "#9c689a", grape: "#837f9c", orchid: "#8a6c94", steel: "#7884a0", sea: "#69a09a",
  wine: "#9c6880", indigo: "#7868a8", slateblue: "#7880a0", pattern: "#6e787e", violet: "#8480a0",
};

const MAP_EXTRA: [number, number, number, string][] = [
  [40, 15, 17, "#a09078"], [41, 17, 24, "#7b9a86"], [42, 16, 24, "#8a9a70"], [45, 17, 25, "#8f6a9c"], [47, 17, 25, "#7868a8"], [50, 17, 25, "#9c689a"], [51, 17, 25, "#a0748a"],
  [54, 9, 25, "#7868a8"], [58, 25, 41, "#7868a8"], [60, 25, 41, "#8f9a68"], [62, 17, 45, "#6f7ab4"], [40, 41, 59, "#7ba09c"], [43, 41, 45, "#8a9a70"], [43, 51, 59, "#8f7090"],
  [48, 43, 59, "#69b0a6"], [52, 50, 55, "#a0a068"], [52, 57, 63, "#a0a068"], [59, 41, 43, "#7868a8"], [44, 61, 63, "#7f7d96"], [45, 63, 71, "#7b9a86"], [47, 63, 71, "#7868a8"],
  [50, 63, 71, "#8f6ab0"], [51, 63, 71, "#9c689a"], [54, 63, 71, "#a09078"], [58, 71, 90, "#7868a8"], [61, 71, 87, "#8f8ab0"], [63, 71, 89, "#a0a078"], [54, 79, 90, "#7868a8"],
  [54, 95, 106, "#7868a8"], [40, 101, 103, "#a09078"], [42, 102, 104, "#8a9a70"], [53, 103, 106, "#8a9a70"],
];

@customElement("overview-map")
export class OverviewMap extends LitElement {
  static styles = css`
    :host { display: block; position: relative; background: #363d44; }
    .view { height: 100%; width: calc(100% * 104.5 / 121); box-sizing: border-box; background: #4f5d64; border: 1px solid #657077; border-width: 2px 2px 1px; }
    .map { position: absolute; inset: 0; width: 100%; height: 100%; }
  `;
  render() {
    return html`<div class="view"></div>
      <svg class="map" viewBox="0 0 ${MAP_BARS} 76" preserveAspectRatio="none" aria-hidden="true">
        ${TRACKS.flatMap((t) =>
          t.clips.map((c) => {
            const key = c.c.split(" ").find((k) => MAP_COLOURS[k]);
            return key ? svg`<rect x=${c.s - 1} y=${4 + t.n} width=${c.e - c.s} height="2" fill=${MAP_COLOURS[key]} opacity="0.85"/>` : nothing;
          })
        )}
        ${MAP_EXTRA.map(([y, s, e, f]) => svg`<rect x=${s - 1} y=${4 + y} width=${e - s} height="3" fill=${f} opacity="0.8"/>`)}
      </svg>`;
  }
}

/* ---------- playlist ---------- */

@customElement("playlist-view")
export class PlaylistView extends LitElement {
  static styles = [
    iconCss,
    css`
      :host { display: grid; grid-template-columns: 223px minmax(0, 1fr) 34px; grid-template-rows: 81px minmax(0, 1fr); min-height: 0; min-width: 0; }
      .corner { display: grid; grid-template-columns: 61px 1fr; padding-top: 1px; }
      .tab { position: relative; }
      .tab .shape { position: absolute; inset: 0; width: 61px; height: 80px; }
      .tab button { position: relative; width: 61px; height: 80px; padding: 34px 0 0 6px; color: #dde1e3; }
      .tab .icon { width: 16px; height: 16px; }
      .tools { display: grid; grid-template: 38px 36px / 58fr 50fr 48fr; border: 2px solid #5e676d; background: #4d555c; color: #70787d; margin: 1px 2px 1px 0; box-shadow: 0 -2px #222b32; }
      .tools .on { color: #d2d8db; }
      .tools .row1 .icon { width: 32px; height: 28px; }
      .tools .row1.wide .icon { width: 42px; }
      .tools .row1.keys .icon { width: 30px; height: 23px; }
      .tools .row2 .icon { width: 20px; height: 20px; }
      .time { display: flex; flex-direction: column; min-width: 0; }
      .mapbar { height: 42px; box-sizing: border-box; padding: 2px 0 2px; display: flex; gap: 2px; background: #2b343b; border-bottom: 1px solid #232c33; }
      .mapbar overview-map { flex: 1; }
      .nav { width: 38px; background: #4d555c; border: 2px solid #5e676d; color: #1f262c; }
      .icon.dark { color: #151c21; }
      .nav .icon { width: 14px; height: 17px; }
      .ruler { flex: 1; margin: 2px 0 3px; background: linear-gradient(#22303a, #1a262e); display: grid; grid-template-columns: repeat(26, 8fr) 1fr; align-items: center; color: #98a3a8; font-size: 19px; line-height: 24px; position: relative; overflow: hidden; padding-top: 2px; }
      .ruler span { min-width: 0; white-space: nowrap; }
      .ruler span:first-child { padding-left: 3px; }
      .marker { position: absolute; left: 0; top: 1px; width: 17px; height: 20px; fill: #b6e873; stroke: #edf7b0; stroke-width: 2; }
      .side { display: grid; grid-template-rows: 40px 1fr; padding: 1px 0 2px; gap: 2px; }
      .side button { background: #4d555c; border: 2px solid #5e676d; border-right: 0; margin-left: 1px; }
      .side .icon { width: 16px; height: 16px; }
      .side i { width: 4px; height: 6px; background: #1e262c; }
      .rows { display: flex; grid-column: 1 / 3; min-height: 0; overflow: hidden; border-bottom: 2px solid #20292f; border-left: 1px solid #20292f; border-top: 1px solid #1b262d; }
      .heads { width: 202px; flex: none; background: #1d2a32; box-sizing: border-box; padding-right: 3px; }
      .th { height: 32px; box-sizing: border-box; position: relative; display: flex; align-items: flex-start; justify-content: space-between; padding: 0 8px 0 4px; border-radius: 0 14px 14px 0; background: linear-gradient(#4d555b, #444b52); border-bottom: 1px solid #3f464c; border-right: 2px solid #3a4349; color: #c9cfd2; font-size: 21px; line-height: 27px; }
      .th.tall { height: 84px; font-size: 25px; line-height: 31px; color: #d3d8da; }
      .led { width: 22px; height: 23px; flex: none; border-radius: 50%; border: 1px solid #7b8382; margin-top: 4px; background: #10260c; box-shadow: inset 0 0 0 1px #5a6662; }
      .led::before { content: ""; width: 16px; height: 17px; box-sizing: border-box; border-radius: 50%; background: linear-gradient(#7fcf1f, #a5e045 50%, #ddf7a8); border: 1px solid #b4e066; }
      .tall .led { margin-top: 53px; }
      .more { position: absolute; left: 28px; bottom: 7px; display: flex; gap: 4px; }
      .more i { width: 4px; height: 4px; background: #30373d; }
      .pick { width: 18px; flex: none; background: #323e45; border-right: 2px solid #14232c; }
      .pick div { height: 32px; box-sizing: border-box; border-bottom: 1px solid #17242c; display: flex; }
      .pick .tall { height: 84px; }
      .pick .sel::before { content: ""; flex: 1; border: 2px solid #b2e84f; border-radius: 2px; margin: 1px 0 1px 0; }
      .canvas { flex: 1; min-width: 0; display: grid; }
      .canvas > * { grid-area: 1 / 1; }
      .bars { display: grid; grid-template-columns: repeat(104, 2fr) 1fr; }
      .bars i { background: #33444e; border-left: 2px solid #10212b; min-width: 0; }
      .bars i.alt { background: #2d3d48; border-left-color: #0a1a24; }
      .lanes { position: relative; min-width: 0; }
      .lanes track-lane { height: 32px; }
      .lanes track-lane.tall { height: 84px; }
      .scroll { display: flex; flex-direction: column; justify-content: space-between; background: repeating-linear-gradient(45deg, #343b43 0 2px, #3a4149 2px 4px); border-left: 1px solid #252d34; border-top: 2px solid #1b262d; margin-bottom: 1px; }
      .scroll button { height: 38px; background: #4d555c; border: 2px solid #5e676d; border-right: 0; }
      .scroll .thumb { height: 67px; box-shadow: 0 2px #252d34; }
      .scroll .icon { width: 16px; height: 18px; }
    `,
  ];
  render() {
    return html`
      <div class="corner">
        <div class="tab">
          <svg class="shape" viewBox="0 0 61 80" aria-hidden="true">
            <path d="M1 80V72L17 12Q20 1 28 1H60V80Z" fill="#4d555c" stroke="#20292f" stroke-width="2" />
            <path d="M3 77V72L19 13Q22 3 29 3H57V77Z" fill="none" stroke="#5e676d" stroke-width="2" />
          </svg>
          <button aria-label="Add track">${icon("0 0 16 16", "", svg`<path d="M6 0H10V6H16V10H10V16H6V10H0V6H6Z"/>`)}</button>
        </div>
        <div class="tools">
          <button class="row1 wide on" aria-label="Audio clips">${I.waves}</button>
          <button class="row1" aria-label="Automation clips">${I.auto}</button>
          <button class="row1 keys" aria-label="Pattern clips">${I.keys}</button>
          <button class="row2 on" aria-label="Crossfade">${I.cross}</button>
          <button class="row2" aria-label="Fade">${I.fade}</button>
          <button class="row2" aria-label="Stretch">${I.stretch}</button>
        </div>
      </div>
      <div class="time">
        <div class="mapbar">
          <button class="nav" aria-label="Scroll left">${I.chev("M14 2L5 12L14 22")}</button>
          <overview-map></overview-map>
          <button class="nav" aria-label="Scroll right">${I.chev("M6 2L15 12L6 22")}</button>
        </div>
        <div class="ruler">
          ${range(1, 106, 4).map((n) => html`<span>${n}</span>`)}
          <svg class="marker" viewBox="0 0 17 20" aria-hidden="true"><path d="M-1 1H15L12 8L0 18Z" /></svg>
        </div>
      </div>
      <div class="side">
        <button aria-label="Zoom"><i></i></button>
        <button aria-label="Scroll up">${I.chev("M2 18L10 5L18 18")}</button>
      </div>
      <div class="rows">
        <div class="heads">
          ${TRACKS.map(
            (t) => html`<div class="th ${t.tall ? "tall" : ""}">
              <span>Track ${t.n}</span>
              <button class="led" aria-label="Mute track ${t.n}"></button>
              ${t.tall ? html`<span class="more"><i></i><i></i><i></i></span>` : nothing}
            </div>`
          )}
        </div>
        <div class="pick">${TRACKS.map((t) => html`<div class="${t.tall ? "tall" : ""} ${t.n === 30 ? "sel" : ""}"></div>`)}</div>
        <div class="canvas">
          <div class="bars">${range(0, 105, 1).map((b) => html`<i class=${Math.floor(b / 4) % 2 ? "alt" : ""}></i>`)}</div>
          <div class="lanes">${TRACKS.map((t) => html`<track-lane class=${t.tall ? "tall" : ""} .track=${t}></track-lane>`)}</div>
        </div>
      </div>
      <div class="scroll">
        <button class="thumb" aria-label="Scroll tracks"></button>
        <button aria-label="Scroll down">${I.chev("M2 7L10 16L18 7")}</button>
      </div>
    `;
  }
}

/* ---------- application ---------- */

@customElement("app-root")
export class AppRoot extends LitElement {
  static styles = [
    iconCss,
    css`
      :host { display: flex; flex-direction: column; height: 100vh; overflow: hidden; font-family: Lato, "Open Sans", sans-serif; background: #41484f; color: #d2d8db; }
      .strip { height: 13px; flex: none; display: flex; background: #596168; border-bottom: 2px solid #2b3239; overflow: hidden; }
      .strip i { flex: none; height: 6px; box-sizing: border-box; background: #3a424a; border-radius: 0 0 5px 5px; border: 1px solid #2c343b; border-top: 0; width: 60px; margin-right: 6px; }
      .strip b { flex: none; width: 1px; background: #444c53; }
      .strip .field { width: 562px; margin: 0 7px 0 8px; border-radius: 0; background: #414a52; border-bottom-width: 2px; }
      .strip .hot { background: #ff9f45; border-color: #c8641c; }
      .strip .cool { background: #4f6d6c; border-color: #3f5a5a; }
      .strip .lcd { background: #536b6a; border: 2px solid #415a5a; border-top: 0; border-radius: 0; width: 265px; }
      .gap { flex: none; }
      .g80 { width: 79px; }
      .g392 { width: 391px; }
      .g6 { width: 6px; }
      .g22 { width: 22px; }
      .grow { flex: 1; }
      .window { flex: 1; min-height: 0; display: flex; border-bottom: 1px solid #2a3138; }
      .grip { width: 15px; flex: none; background: #464d55; border-left: 1px solid #343b42; border-right: 1px solid #2b3239; display: flex; flex-direction: column; align-items: center; justify-content: center; gap: 5px; }
      .grip i { width: 3px; height: 3px; background: #2c333a; }
      .main { flex: 1; min-width: 0; display: grid; grid-template: 54px minmax(0, 1fr) 10px / 312px minmax(0, 1fr); column-gap: 11px; padding-left: 11px; }
      .title { grid-column: 1 / 3; display: flex; align-items: center; padding-top: 6px; box-sizing: border-box; }
      .title button { width: 42px; height: 42px; }
      .title .icon { width: 31px; height: 30px; }
      .title .play { width: 40px; color: #b9c0c4; }
      .title .blue { color: #7cc8f8; }
      .tools { display: flex; margin: 0 22px 0 25px; }
      .crumb { display: flex; align-items: center; gap: 10px; margin: 0 0 4px 7px; font-family: "Open Sans", "Noto Sans", sans-serif; font-size: 26px; line-height: 32px; white-space: nowrap; }
      .crumb i { width: 0; border: solid transparent; border-width: 8px 0 8px 9px; border-left-color: #70777d; }
      .wm { margin-left: auto; margin-right: -1px; display: flex; gap: 18px; }
      .wm button { width: 20px; height: 42px; }
      .wm .icon { width: 19px; height: 20px; flex: none; }
      playlist-view { grid-row: 2; grid-column: 2; }
      pattern-picker { grid-row: 2 / 4; grid-column: 1; }
    `,
  ];
  render() {
    const tools: [unknown, string, string][] = [
      [I.pencil, "Draw", ""], [I.brush, "Paint", "blue"], [I.ban, "Delete", ""], [I.mute, "Mute", ""], [I.slip, "Slip", ""],
      [I.knife, "Slice", ""], [I.select, "Select", ""], [I.zoom, "Zoom", ""], [I.playback, "Playback", ""],
    ];
    return html`
      <div class="strip">
        <i class="field"></i><b></b><span class="gap g80"></span><b></b><span class="gap g80"></span><b></b><span class="gap g392"></span><b></b><span class="gap g6"></span>
        <i class="hot"></i><i></i><i></i><i></i><i></i>
        <span class="grow"></span>
        ${range(0, 9, 1).map(() => html`<i></i>`)}<i class="cool"></i><b></b><span class="gap g6"></span><i class="lcd"></i><b></b><span class="gap g22"></span>
      </div>
      <div class="window">
        <div class="grip">${range(0, 5, 1).map(() => html`<i></i>`)}</div>
        <div class="main">
          <header class="title">
            <button class="play" aria-label="Menu">${I.play}</button>
            <button aria-label="Snap">${I.magnet}</button>
            <div class="tools">${tools.map(([ic, name, cls]) => html`<button class=${cls} aria-label=${name}>${ic}</button>`)}</div>
            <button aria-label="Preview">${I.speaker}</button>
            <div class="crumb"><span>Playlist - Arrangement</span><i></i><span>Agus Zack Clap Fx 04 #2</span><i></i></div>
            <div class="wm">
              <button aria-label="Minimise">${I.min}</button>
              <button aria-label="Maximise">${I.max}</button>
              <button aria-label="Close">${I.close}</button>
            </div>
          </header>
          <pattern-picker></pattern-picker>
          <playlist-view></playlist-view>
        </div>
      </div>
    `;
  }
}
